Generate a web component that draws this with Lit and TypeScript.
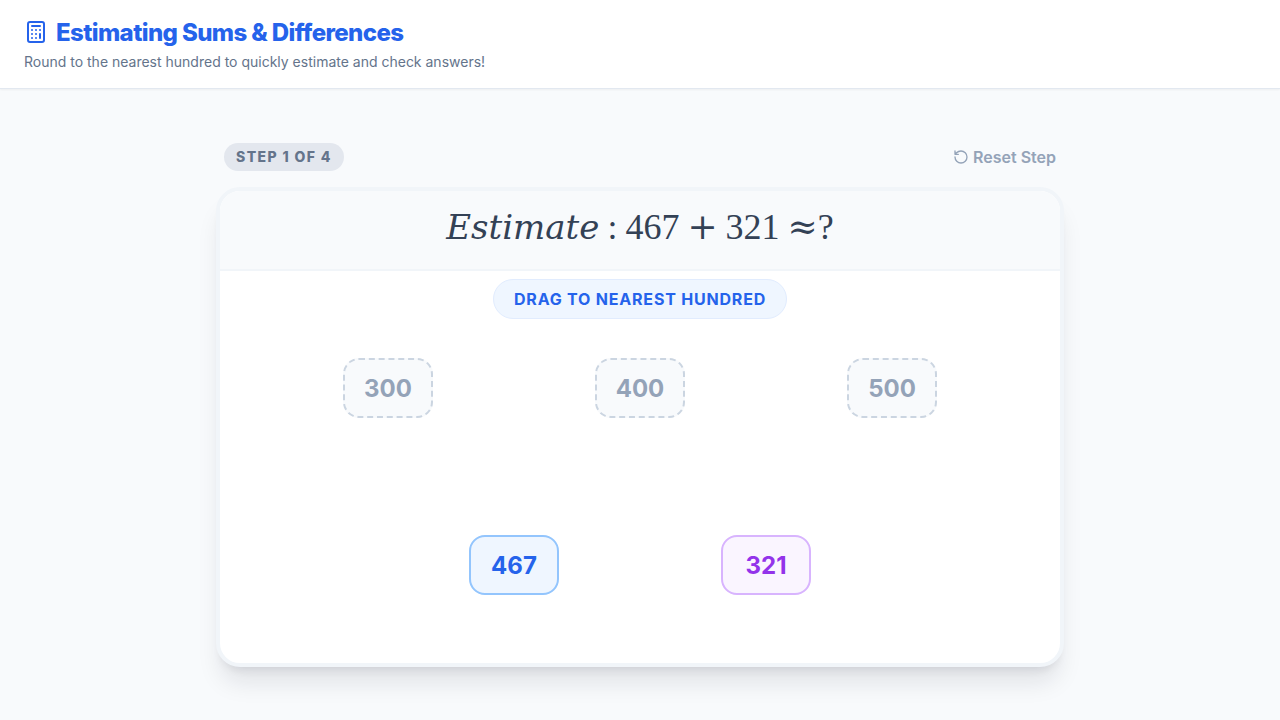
import { LitElement, html, css } from "lit";
import { customElement, state } from "lit/decorators.js";
import { classMap } from "lit/directives/class-map.js";

@customElement("app-root")
export class AppRoot extends LitElement {
  static styles = css`
    :host {
      display: flex;
      flex-direction: column;
      min-height: 100vh;
      background: #f8fafc;
      color: #334155;
      font-family: Inter, "Liberation Sans", sans-serif;
    }
    * {
      box-sizing: border-box;
    }
    header {
      padding: 16px 24px;
      background: #fff;
      border-bottom: 1px solid #e2e8f0;
      box-shadow: 0 1px 2px rgb(0 0 0 / 0.05);
    }
    h1 {
      display: flex;
      align-items: center;
      gap: 8px;
      margin: 0;
      font-size: 24px;
      line-height: 30px;
      font-weight: 800;
      letter-spacing: -0.025em;
      color: #2563eb;
    }
    .title {
      padding-top: 2px;
    }
    .intro {
      margin: 4px 0 0;
      font-size: 14px;
      line-height: 20px;
      color: #64748b;
    }
    .icon {
      flex: none;
      fill: none;
      stroke: currentColor;
      stroke-width: 2;
      stroke-linecap: round;
      stroke-linejoin: round;
    }
    main {
      flex: 1;
      display: flex;
      flex-direction: column;
      justify-content: center;
      gap: 16px;
      width: 100%;
      max-width: 896px;
      margin: 0 auto;
      padding: 0 24px;
    }
    .bar {
      display: flex;
      align-items: center;
      justify-content: space-between;
      padding: 0 8px;
    }
    .step {
      padding: 4px 12px;
      border-radius: 14px;
      background: #e3e7ee;
      color: #64748b;
      font-size: 14px;
      line-height: 20px;
      font-weight: 800;
      letter-spacing: 0.1em;
      text-transform: uppercase;
    }
    button {
      margin: 0;
      font-family: inherit;
      cursor: pointer;
    }
    .reset {
      display: flex;
      align-items: center;
      gap: 4px;
      padding: 0;
      border: 0;
      background: none;
      color: #94a3b8;
      font-size: 16px;
      line-height: 24px;
      font-weight: 600;
    }
    .card {
      display: flex;
      flex-direction: column;
      min-height: 480px;
      border: 4px solid #f1f5f9;
      border-radius: 24px;
      background: #fff;
      overflow: hidden;
      box-shadow:
        0 20px 25px -5px rgb(15 23 42 / 0.1),
        0 8px 10px -6px rgb(15 23 42 / 0.1);
    }
    .question {
      display: flex;
      align-items: baseline;
      justify-content: center;
      gap: 8px;
      margin: 0;
      padding: 12px 24px 18px;
      border-bottom: 2px solid #f1f5f9;
      background: #f8fafc;
      font-family: "Liberation Serif", serif;
      font-size: 36px;
      line-height: 48px;
      font-weight: 400;
      color: #334155;
    }
    .word {
      font-family: "DejaVu Serif", "Liberation Serif", serif;
      font-style: italic;
      font-size: 34px;
    }
    .operator {
      font-family: "DejaVu Serif", "Liberation Serif", serif;
    }
    .board {
      flex: 1;
      display: flex;
      flex-direction: column;
      align-items: center;
      padding: 8px 0 68px;
    }
    .hint {
      margin: 0;
      padding: 7px 20px;
      border: 1px solid #e1ecfe;
      border-radius: 20px;
      background: #eff6ff;
      color: #2563eb;
      font-size: 16px;
      line-height: 24px;
      font-weight: 700;
      letter-spacing: 0.05em;
      text-transform: uppercase;
    }
    .row {
      display: grid;
      grid-auto-flow: column;
      grid-auto-columns: 1fr;
      justify-items: center;
    }
    .targets {
      width: 90%;
      margin-top: 39px;
    }
    .numbers {
      width: 60%;
      margin-top: auto;
    }
    .tile {
      width: 90px;
      height: 60px;
      display: grid;
      place-items: center;
      padding: 2px 0 0;
      border: 2px solid;
      border-radius: 16px;
      font-size: 24px;
      line-height: 32px;
      font-weight: 700;
    }
    .target {
      border-style: dashed;
      border-color: #cbd5e1;
      background: #f8fafc;
      color: #94a3b8;
    }
    .blue {
      border-color: #93c5fd;
      background: #eff6ff;
      color: #2563eb;
    }
    .purple {
      border-color: #d8b4fe;
      background: #faf5ff;
      color: #9333ea;
    }
  `;

  @state() private step = 1;
  private readonly hundreds = [300, 400, 500];
  private readonly numbers = [
    { value: 467, tone: "blue" },
    { value: 321, tone: "purple" },
  ];

  render() {
    return html`
      <header>
        <h1>
          <svg class="icon" width="24" height="24" viewBox="0 0 24 24" aria-hidden="true">
            <rect x="4" y="2" width="16" height="20" rx="2" />
            <path d="M8 6h8M16 14v4M16 10h.01M12 10h.01M8 10h.01M12 14h.01M8 14h.01M12 18h.01M8 18h.01" />
          </svg>
          <span class="title">Estimating Sums &amp; Differences</span>
        </h1>
        <p class="intro">Round to the nearest hundred to quickly estimate and check answers!</p>
      </header>
      <main>
        <div class="bar">
          <span class="step">Step ${this.step} of 4</span>
          <button class="reset" @click=${() => (this.step = 1)}>
            <svg class="icon" width="16" height="16" viewBox="0 0 24 24" aria-hidden="true">
              <path d="M3 12a9 9 0 1 0 9-9 9.75 9.75 0 0 0-6.74 2.74L3 8M3 3v5h5" />
            </svg>
            Reset Step
          </button>
        </div>
        <section class="card">
          <h2 class="question">
            <span class="word">Estimate</span><span>:</span><span>467</span><span class="operator">+</span><span>321</span><span><span class="operator">≈</span>?</span>
          </h2>
          <div class="board">
            <p class="hint">Drag to nearest hundred</p>
            <div class="row targets">
              ${this.hundreds.map((n) => html`<div class="tile target">${n}</div>`)}
            </div>
            <div class="row numbers">
              ${this.numbers.map(
                (n) => html`<button draggable="true" class=${classMap({ tile: true, [n.tone]: true })}>${n.value}</button>`
              )}
            </div>
          </div>
        </section>
      </main>
    `;
  }
}
